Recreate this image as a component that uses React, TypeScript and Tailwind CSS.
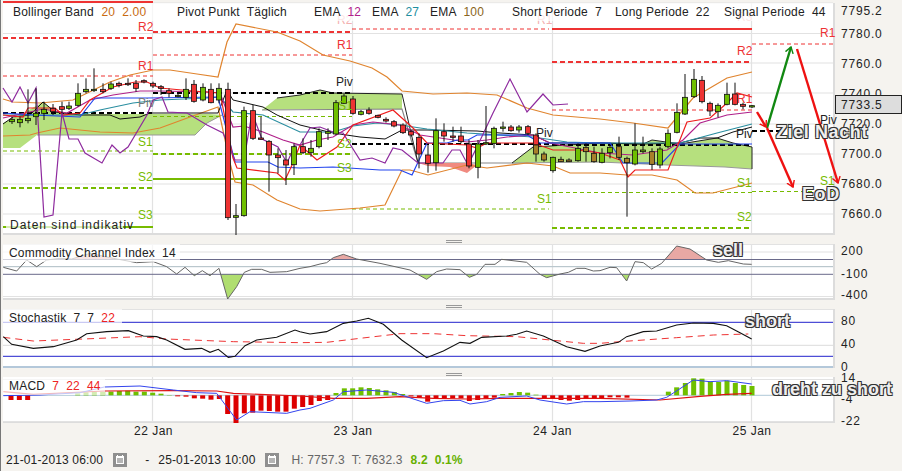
import type { ReactNode } from "react";

type Pt = [number, number];
type Candle = [number, number, number, number, number, "g" | "r" | "o"];

const RED = "#ee3333";
const GREEN = "#77bb00";

const line = (p: Pt[]) => p.map(([x, y]) => `${x},${y}`).join(" ");
// points read off the 3x crops: x offset by crop, y offset by crop
const crop = (p: Pt[], ox: number, oy: number): Pt[] =>
	p.map(([x, y]) => [x / 3 + ox, y / 3 + oy]);

const upperBand: Pt[] = [[3,99],[13,102],[40,103],[73,100],[110,82],[130,75],[153,70],[170,70],[197,74],[218,77],[227,42],[236,24],[277,32],[300,41],[323,55],[350,61],[372,68],[387,77],[402,91],[433,94],[467,93],[497,95],[527,108],[553,115],[600,119],[633,123],[668,128],[693,98],[727,78],[752,72]];
const lowerBand: Pt[] = [[3,136],[30,135],[37,133],[60,128],[100,132],[133,133],[160,128],[190,117],[218,107],[230,163],[235,182],[253,185],[277,200],[300,209],[320,211],[360,208],[385,205],[402,170],[410,170],[428,175],[467,165],[487,168],[527,163],[553,166],[570,173],[600,173],[627,175],[652,175],[677,180],[695,193],[713,193],[752,183]];
const purple: Pt[] = [[3,88],[12,102],[20,87],[28,103],[36,88],[44,217],[53,215],[62,113],[69,139],[78,139],[85,153],[102,163],[112,145],[120,153],[128,147],[147,115],[153,100],[162,97],[168,112],[187,113],[207,125],[223,133],[235,160],[244,160],[252,113],[262,139],[268,142],[278,147],[287,163],[295,145],[300,145],[310,128],[320,127],[333,132],[343,133],[360,160],[372,158],[385,163],[393,148],[402,150],[418,163],[443,163],[452,150],[460,150],[468,165],[477,147],[493,113],[510,79],[527,112],[543,94],[553,105],[568,104]];
const magenta: Pt[] = [[3,118],[43,109],[67,113],[90,100],[113,95],[140,91],[160,91],[207,92],[220,93],[233,127],[244,126],[263,132],[283,140],[300,145],[317,140],[333,137],[353,125],[373,122],[400,125],[420,135],[467,142],[487,140],[507,137],[533,135],[550,143],[600,153],[633,155],[667,150],[683,140],[700,123],[727,115],[752,112]];
const teal: Pt[] = [[3,115],[80,115],[100,110],[133,103],[160,100],[207,98],[220,97],[233,112],[263,115],[300,132],[333,132],[353,126],[377,123],[400,125],[427,129],[467,133],[533,137],[567,142],[600,143],[680,143],[717,133],[752,124]];
const blue: Pt[] = [[3,113],[33,115],[80,117],[95,98],[147,98],[218,97],[235,162],[268,162],[278,167],[300,168],[333,167],[380,170],[400,170],[412,175],[427,143],[447,143],[457,140],[468,140],[477,135],[527,135],[540,143],[567,143],[610,143],[623,163],[662,163],[680,144],[752,144]];
const redLine: Pt[] = [[3,115],[23,117],[28,108],[55,108],[63,115],[80,113],[90,100],[113,87],[135,82],[147,82],[160,88],[193,91],[220,93],[233,158],[237,168],[277,173],[285,180],[293,163],[300,145],[317,160],[337,147],[353,125],[393,110],[413,128],[427,143],[467,145],[477,148],[487,143],[533,143],[553,150],[577,150],[600,153],[620,160],[628,177],[635,170],[668,170],[687,122],[710,118],[727,103],[737,93],[752,97]];
const kijun: Pt[] = [[3,124],[13,117],[30,115],[43,102],[55,112],[80,115],[110,115],[120,119],[140,117],[150,113],[210,113],[218,113],[227,90],[233,100],[263,107],[277,115],[300,125],[333,133],[360,137],[385,139],[402,130],[427,130],[477,131],[500,133],[533,135],[550,143],[600,143],[643,144],[680,143],[700,138],[717,138],[733,132],[752,127]];

const candles: Candle[] = [
	[12,358,365,350,372,"g"],[20,358,368,350,382,"g"],[28,355,362,268,370,"g"],[36,340,350,265,375,"g"],[44,328,340,305,360,"g"],[53,325,335,312,345,"r"],[62,320,328,305,340,"r"],[69,318,325,305,330,"g"],[78,280,316,250,320,"g"],[86,268,275,235,280,"g"],[94,268,272,205,276,"g"],[103,268,275,250,280,"r"],[111,252,265,245,270,"g"],[119,250,256,245,262,"r"],[128,250,254,235,258,"r"],[136,250,265,240,275,"r"],[144,242,246,238,250,"r"],[153,250,258,245,264,"r"],[161,260,265,255,285,"r"],[169,272,280,265,292,"r"],[178,286,290,280,292,"g"],[186,268,292,235,300,"g"],[194,253,304,240,308,"r"],[203,262,300,250,304,"g"],[211,268,308,250,310,"r"],[219,265,300,250,310,"g"],[228,268,653,248,660,"r"],[236,647,652,612,705,"g"],[244,332,647,320,650,"g"],[253,332,415,315,420,"r"],[261,414,418,350,420,"r"],[269,424,465,420,575,"r"],[278,465,473,445,520,"r"],[286,480,495,450,555,"r"],[294,440,494,430,525,"g"],
	[303,440,458,415,462,"r"],[311,445,458,420,470,"g"],[319,395,440,385,445,"g"],[328,395,400,385,420,"g"],[336,308,402,300,405,"g"],[344,288,310,282,312,"g"],[353,297,340,288,344,"r"],[361,335,343,330,346,"g"],[369,330,340,322,344,"r"],[378,346,352,344,355,"r"],[386,358,363,352,368,"r"],[394,365,378,360,382,"r"],[403,375,398,370,402,"r"],[411,395,405,390,410,"r"],[419,412,462,400,505,"r"],[428,465,490,435,518,"r"],[436,392,488,355,512,"g"],[444,395,408,370,425,"r"],[453,408,412,380,425,"r"],[461,408,425,380,430,"r"],[469,432,498,420,505,"r"],[478,432,502,420,535,"g"],[486,428,432,318,435,"g"],[494,385,430,380,445,"g"],[503,381,385,365,395,"g"],[511,381,392,375,395,"r"],[519,381,390,375,398,"g"],[528,380,400,375,405,"r"],[536,405,435,400,438,"r"],[536,435,462,435,485,"o"],[544,462,480,455,485,"o"],[553,472,512,470,518,"g"],[561,478,485,470,486,"o"],[569,480,485,475,486,"o"],[578,445,482,430,485,"g"],[586,442,455,430,485,"o"],[594,460,485,440,488,"o"],
	[602,460,487,445,490,"g"],[610,442,458,435,475,"g"],[619,440,472,410,480,"o"],[627,475,488,470,650,"o"],[635,450,492,370,496,"g"],[643,450,455,410,460,"g"],[652,455,493,445,510,"o"],[660,447,495,440,505,"g"],[668,400,440,388,445,"g"],[677,337,397,310,400,"g"],[685,292,342,222,345,"g"],[694,238,290,207,294,"g"],[702,241,305,228,310,"r"],[710,310,333,305,348,"r"],[718,316,335,310,352,"g"],[727,283,313,248,316,"g"],[735,282,313,248,316,"r"],[743,313,319,308,328,"r"],[752,317,321,315,324,"g"],
];

function Handle() {
	return (
		<div className="flex h-[9px] flex-col gap-px pt-[5px] pl-[446px]">
			<div className="h-px w-[16px] bg-[#999]" />
			<div className="h-px w-[16px] bg-[#999]" />
		</div>
	);
}

function Panel({ top, height, axis, children, labels }: { top: number; height: number; axis: ReactNode; children: ReactNode; labels: ReactNode }) {
	return (
		<div className="flex pl-[3px]" style={{ height }}>
			<div className="relative w-[832px] border-r-2 border-b-2 border-[#dcdcdc] bg-white" style={{ height }}>
				<svg width={830} height={height - 2} viewBox={`3 ${top} 830 ${height - 2}`} className="block overflow-visible">
					{children}
				</svg>
				{labels}
			</div>
			{axis}
		</div>
	);
}

function VGrid({ y1, y2 }: { y1: number; y2: number }) {
	return (
		<g stroke="#e2e2e2" strokeWidth={1.2}>
			{[152.5, 352.5, 552.5, 751.5].map((x) => (
				<line key={x} x1={x} x2={x} y1={y1} y2={y2} />
			))}
		</g>
	);
}

function HGrid({ ys, x2 = 833 }: { ys: number[]; x2?: number }) {
	return (
		<g stroke="#e2e2e2" strokeWidth={1.2}>
			{ys.map((y) => (
				<line key={y} x1={3} x2={x2} y1={y} y2={y} />
			))}
		</g>
	);
}

type Level = [number, number, number, "thick" | "thin" | "solid", string];
const levels: Level[] = [
	[3,153,2,"solid",RED],[3,153,38,"thick",RED],[3,153,76,"thin",RED],[3,153,113,"thick","#000"],[3,153,151,"thin",GREEN],[3,153,188,"thick",GREEN],[3,153,227,"solid",GREEN],
	[153,352,32,"thick",RED],[153,352,55,"thin",RED],[153,352,93,"thick","#000"],[153,352,116.5,"thin",GREEN],[153,352,154,"thick",GREEN],[153,353,179,"solid",GREEN],
	[352,549,29,"thin",RED],[352,549,144,"thick","#000"],[352,549,209,"thin",GREEN],
	[552,752,29,"solid",RED],[552,752,62,"thick",RED],[552,752,110,"thin",RED],[552,752,145,"thick","#000"],[552,752,192.5,"thin",GREEN],[552,752,228,"thick",GREEN],
	[752,833,44,"thin",RED],[752,780,131,"thick","#000"],[752,833,191.5,"thin",GREEN],
];

const pivotLabels: [number, number, string, string][] = [
	[138,31,"R2",RED],[138,70,"R1",RED],[138,107,"Piv","#777"],[138,146,"S1",GREEN],[138,181,"S2",GREEN],[138,219,"S3",GREEN],
	[337,24,"R2","#f3b0b0"],[337,49,"R1",RED],[336,86,"Piv","#222"],[338,110,"S1",GREEN],[337,148,"S2",GREEN],[337,172,"S3",GREEN],
	[537,24,"R1","#f3b0b0"],[536,137,"Piv","#222"],[537,203,"S1",GREEN],
	[737,21,"R3","#f3b0b0"],[737,55,"R2",RED],[737,103,"R1",RED],[736,138,"Piv","#222"],[737,187,"S1",GREEN],[737,221,"S2",GREEN],
	[820,37,"R1",RED],[820,124,"Piv","#222"],[820,185,"S1",GREEN],
];

function MainChart() {
	return (
		<>
			<defs>
				<marker id="headR" markerUnits="userSpaceOnUse" markerWidth="7" markerHeight="10" refX="6" refY="5" orient="auto">
					<path d="M0 1 L6 5 L0 9" fill="none" stroke="#ee1111" strokeWidth="1.4" />
				</marker>
				<marker id="headG" markerUnits="userSpaceOnUse" markerWidth="7" markerHeight="10" refX="6" refY="5" orient="auto">
					<path d="M0 1 L6 5 L0 9" fill="none" stroke="#118811" strokeWidth="1.4" />
				</marker>
			</defs>
			<HGrid ys={[3, 33.5, 63, 93, 124, 154, 184, 214]} />
			<VGrid y1={3} y2={233} />

			<polygon points="3,123 20,115 43,102 55,111 80,114 210,114 222,115 207,123 195,135 37,135 20,148 3,148" fill="#b6e07e" />
			<polyline points="37,135 195,135 207,123 222,115" fill="none" stroke="#999" />
			<polygon points="262,110 277,98 300,95 320,90 333,93 402,94 402,109 300,109" fill="#b6e07e" />
			<polyline points="262,110 402,109 418,163 468,163 512,163 533,163" fill="none" stroke="#888" strokeWidth={1.2} />
			<polyline points="277,98 300,95 320,90 333,93 402,94 418,163" fill="none" stroke="#222" />
			<polygon points="418,163 468,163 477,165 467,173 450,167 428,166" fill="#f08a80" />
			<polygon points="512,163 533,147 600,143 643,144 652,140 680,144 717,138 733,143 752,147 752,169 725,167 667,165 600,162" fill="#b6e07e" />
			<polyline points="512,163 600,162 667,165 725,167 752,169" fill="none" stroke="#999" />
			<polyline points="512,163 533,147 600,143 643,144 652,140 680,144 717,138 733,143 752,147 752,169" fill="none" stroke="#222" />

			{levels.map(([x1, x2, y, kind, color], i) => (
				<line
					key={i}
					x1={x1}
					x2={x2}
					y1={y}
					y2={y}
					stroke={color}
					strokeWidth={kind === "thin" ? 1 : 2}
					strokeDasharray={kind === "thick" ? "5 3" : kind === "thin" ? "4 3" : undefined}
				/>
			))}

			<polyline points={line(upperBand)} fill="none" stroke="#e0842e" strokeWidth={1.2} />
			<polyline points={line(lowerBand)} fill="none" stroke="#e0842e" strokeWidth={1.2} />
			<polyline points={line(kijun)} fill="none" stroke="#111" strokeWidth={1} />
			<polyline points={line(teal)} fill="none" stroke="#2a8ea0" strokeWidth={1.2} />
			<polyline points={line(magenta)} fill="none" stroke="#b0208a" strokeWidth={1.2} />
			<polyline points={line(blue)} fill="none" stroke="#2244ee" strokeWidth={1.2} />
			<polyline points={line(redLine)} fill="none" stroke="#ee1c1c" strokeWidth={1.2} />
			<polyline points={line(purple)} fill="none" stroke="#8e2a9e" strokeWidth={1.2} />

			{candles.map(([x, top, bottom, wt, wb, c], i) => (
				<g key={i} stroke="#111">
					<line x1={x} x2={x} y1={wt / 3} y2={wb / 3} />
					<rect
						x={x - 2.5}
						y={top / 3}
						width={5}
						height={(bottom - top) / 3}
						strokeWidth={0.8}
						fill={c === "g" ? "#6fbf00" : c === "r" ? "#ee3333" : "#a8802a"}
					/>
				</g>
			))}

			{pivotLabels.map(([x, y, t, color], i) => (
				<text key={i} x={x} y={y} fill={color} className="text-[12px]">
					{t}
				</text>
			))}

			<line x1={767} y1={128} x2={791} y2={47} stroke="#118811" strokeWidth={2.4} markerEnd="url(#headG)" />
			<g stroke="#ee1111" strokeWidth={2.4}>
				<line x1={757} y1={112} x2={766} y2={127} markerEnd="url(#headR)" />
				<line x1={767} y1={128} x2={793} y2={187} markerEnd="url(#headR)" />
				<line x1={797} y1={49} x2={838} y2={183} markerEnd="url(#headR)" />
			</g>
		</>
	);
}

function Bars() {
	const data: [number, number, number, string][] = [];
	const add = (off: number, list: [number, number][], color: string) => {
		for (const [x, y] of list) data.push([x / 3 + off, y, 481, color]);
	};
	add(0, [[33,495],[58,495],[83,495],[533,484],[558,485],[583,490],[608,491],[633,494],[658,492],[683,537],[708,564],[733,535],[758,533],[783,527],[808,528],[833,530],[858,530],[883,521]], "#dd0000");
	add(0, [[233,475],[258,472],[283,470],[308,470],[333,470],[358,468],[383,467],[408,470],[433,470],[458,473],[483,476],[508,480]], "#6fbf00");
	add(300, [[8,516],[33,510],[58,498],[83,495],[333,484],[358,488],[383,500],[408,492],[433,490],[458,490],[483,490],[508,498],[533,495],[558,490],[583,488],[733,490],[758,490],[783,495],[808,497],[833,495],[858,490],[883,490]], "#dd0000");
	add(300, [[108,474],[133,460],[158,460],[183,457],[208,459],[233,463],[258,466],[283,471],[308,477],[608,477],[633,474],[658,471],[683,473],[708,479]], "#6fbf00");
	add(600, [[5,490],[30,487],[55,487],[81,488]], "#dd0000");
	add(600, [[205,470],[230,457],[256,444],[281,430],[306,431],[331,440],[356,441],[381,437],[406,444],[431,450],[456,453]], "#6fbf00");
	return (
		<>
			{data.map(([x, y, base, color], i) => (
				<rect
					key={i}
					x={x - 2.5}
					y={235 + Math.min(y, base) / 3}
					width={5}
					height={Math.abs(y - base) / 3}
					fill={color}
				/>
			))}
		</>
	);
}

const cci: Pt[] = [
	...crop([[10,97],[50,108],[80,75],[110,95],[140,75],[180,70],[215,72],[270,55],[340,70],[410,83],[460,80],[500,95],[530,117],[555,97],[583,122],[607,107],[630,122],[657,100],[683,192],[710,155],[733,112],[755,103],[785,103],[810,112],[860,110],[900,100]], 0, 235),
	...crop([[30,95],[60,87],[80,83],[100,68],[130,58],[170,72],[240,85],[330,105],[380,133],[410,110],[440,102],[480,104],[508,127],[530,118],[555,88],[585,88],[605,73],[680,82],[720,118],[740,128],[780,117],[805,112],[830,100],[855,100],[880,108],[900,107]], 300, 235),
	...crop([[30,97],[50,98],[80,138],[105,80],[130,83],[155,102],[185,85],[230,33],[270,42],[320,75],[355,82],[385,77],[430,87],[455,88]], 600, 235),
];
const stoch: Pt[] = [
	...crop([[10,305],[35,328],[100,340],[160,335],[230,315],[260,296],[320,290],[385,287],[430,303],[470,305],[500,315],[555,343],[605,340],[630,352],[655,343],[685,367],[705,364],[735,332],[770,315],[830,307],[885,285],[900,290]], 0, 235),
	...crop([[30,297],[80,290],[130,265],[170,258],[205,250],[250,268],[305,315],[380,368],[430,348],[480,322],[510,325],[545,307],[620,303],[650,298],[680,288],[730,303],[800,335],[855,349],[900,333]], 300, 235),
	...crop([[55,322],[80,305],[130,290],[170,288],[230,270],[280,264],[340,265],[380,272],[420,293],[455,312]], 600, 235),
];
const stochSignal: Pt[] = [
	...crop([[10,307],[100,318],[250,312],[420,305],[500,312],[700,320],[900,323]], 0, 235),
	...crop([[80,322],[180,310],[300,296],[400,296],[500,302],[650,305],[750,315],[850,325],[900,325]], 300, 235),
	...crop([[60,320],[230,308],[340,300],[445,297]], 600, 235),
];
const macdRed: Pt[] = [
	...crop([[10,470],[100,478],[313,468],[520,467],[650,468],[700,475],[900,483]], 0, 235),
	...crop([[100,490],[200,490],[300,485],[400,490],[500,492],[600,490],[900,490]], 300, 235),
	...crop([[180,495],[300,484],[380,478],[455,475]], 600, 235),
];
const macdBlue: Pt[] = [
	...crop([[10,482],[120,480],[240,473],[313,456],[420,453],[520,465],[590,473],[650,475],[710,555],[750,530],[860,535],[900,525]], 0, 235),
	...crop([[30,520],[100,495],[130,470],[200,465],[280,472],[380,505],[430,497],[480,496],[510,507],[560,500],[600,487],[680,483],[720,495],[800,507],[850,500],[900,500]], 300, 235),
	...crop([[90,498],[170,495],[200,487],[280,435],[330,440],[380,437],[455,447]], 600, 235),
];

function AxisColumn({ rows, mt = 0 }: { rows: [string, number][]; mt?: number }) {
	return (
		<div className="w-[67px] pl-[6px] text-[12px] tracking-[0.8px] text-[#222]" style={{ marginTop: mt }}>
			{rows.map(([t, h]) => (
				<div key={t} className="flex items-center" style={{ height: h }}>
					{t}
				</div>
			))}
		</div>
	);
}

function Legend({ w, children }: { w: number; children: ReactNode }) {
	return (
		<div className="absolute top-0 left-0 flex h-[18px] items-center whitespace-nowrap bg-white/70 pl-[6px] text-[12px] tracking-[0.2px] text-[#222]" style={{ width: w }}>
			{children}
		</div>
	);
}

function CalendarIcon() {
	return (
		<svg width={14} height={14} viewBox="0 0 14 14" className="block shrink-0">
			<rect width={14} height={14} fill="#8f8f8f" />
			<rect x={3.5} y={3.5} width={7} height={7} fill="#b5b5b5" stroke="#fff" strokeWidth={1} />
			<rect x={3} y={3} width={8} height={2} fill="#fff" />
			<rect x={4} y={2} width={1} height={1} fill="#fff" />
			<rect x={9} y={2} width={1} height={1} fill="#fff" />
		</svg>
	);
}

const overlayText =
	"absolute font-bold whitespace-nowrap text-[#eeeeee] [text-shadow:-1px_-1px_0_#333,1px_-1px_0_#333,-1px_1px_0_#333,1px_1px_0_#333]";

export default function App() {
	return (
		<div className="relative flex h-[471px] w-[902px] flex-col overflow-hidden border-l border-[#777] bg-[#f5f3ef] font-['Liberation_Sans',Arial,sans-serif]">
			<div className="-ml-px shrink-0 pt-[3px]">
				<Panel
					top={3}
					height={232}
					axis={
						<div className="relative">
							<AxisColumn
								rows={[["7795.2", 15.5], ["7780.0", 30], ["7760.0", 30], ["7740.0", 30], ["7720.0", 30], ["7700.0", 30], ["7680.0", 30], ["7660.0", 30]]}
							/>
							<div className="absolute top-[92px] left-0 flex h-[19px] w-[67px] items-center border border-[#222] bg-[#dddddd] pl-[5px] text-[12px] tracking-[0.8px] text-[#222]">
								7733.5
							</div>
						</div>
					}
					labels={
						<>
							<Legend w={830}>
								<span className="w-[168px] pl-[4px]">Bollinger Band <span className="ml-[4px] text-[#c86a10]">20&nbsp; 2.00</span></span>
								<span className="w-[137px]">Pivot Punkt&nbsp; Täglich</span>
								<span className="w-[58px]">EMA <span className="ml-[4px] text-[#b0208a]">12</span></span>
								<span className="w-[58px]">EMA <span className="ml-[4px] text-[#1f8fa0]">27</span></span>
								<span className="w-[82px]">EMA <span className="ml-[4px] text-[#8a6420]">100</span></span>
								<span className="w-[103px]">Short Periode&nbsp; 7</span>
								<span className="w-[109px]">Long Periode&nbsp; 22</span>
								<span>Signal Periode&nbsp; 44</span>
							</Legend>
							<div className="absolute bottom-[1px] left-[3px] h-[14px] w-[117px] whitespace-nowrap bg-white/70 pl-[4px] text-[12px] leading-[14px] tracking-[1px] text-[#222]">
								Daten sind indikativ
							</div>
						</>
					}
				>
					<MainChart />
				</Panel>
				<Handle />

				<Panel
					top={244}
					height={56}
					axis={<AxisColumn rows={[["200", 14], ["-100", 32], ["-400", 10]]} />}
					labels={
						<Legend w={177}>
							<span>Commodity Channel Index&nbsp; 14</span>
						</Legend>
					}
				>
					<defs>
						<clipPath id="above"><rect x={3} y={240} width={830} height={19.5} /></clipPath>
						<clipPath id="below"><rect x={3} y={274} width={830} height={30} /></clipPath>
					</defs>
					<HGrid ys={[244.5, 252, 266.5, 296.5]} />
					<VGrid y1={244} y2={298} />
					<polygon points={line([[3, 259.5], ...cci, [752, 259.5]])} fill="#e8a8a4" clipPath="url(#above)" />
					<polygon points={line([[3, 274], ...cci, [752, 274]])} fill="#b0de70" clipPath="url(#below)" />
					<line x1={3} x2={833} y1={266.7} y2={266.7} stroke="#b0c0c8" />
					<line x1={3} x2={833} y1={259.5} y2={259.5} stroke="#6a6a8a" />
					<line x1={3} x2={833} y1={274.3} y2={274.3} stroke="#6a6a8a" />
					<polyline points={line(cci)} fill="none" stroke="#666" />
				</Panel>
				<Handle />

				<Panel
					top={309}
					height={59}
					axis={<AxisColumn rows={[["80", 23], ["40", 23], ["0", 23]]} />}
					labels={
						<Legend w={119}>
							<span>Stochastik&nbsp; 7&nbsp; 7&nbsp; <span className="text-[#ee2222]">22</span></span>
						</Legend>
					}
				>
					<HGrid ys={[309.5, 345.3]} />
					<VGrid y1={309} y2={366} />
					<line x1={3} x2={833} y1={367} y2={367} stroke="#b4c8da" strokeWidth={2} />
					<line x1={3} x2={833} y1={322.3} y2={322.3} stroke="#2222cc" />
					<line x1={3} x2={833} y1={356.3} y2={356.3} stroke="#2222cc" />
					<polyline points={line(stochSignal)} fill="none" stroke="#ee3333" strokeDasharray="7 5" />
					<polyline points={line(stoch)} fill="none" stroke="#111" strokeWidth={1.1} />
				</Panel>
				<Handle />

				<Panel
					top={377}
					height={46}
					axis={<AxisColumn mt={-6} rows={[["14", 14], ["-4", 28], ["-22", 16]]} />}
					labels={
						<Legend w={102}>
							<span>MACD&nbsp; <span className="text-[#ee2222]">7&nbsp; 22&nbsp; 44</span></span>
						</Legend>
					}
				>
					<HGrid ys={[379.5, 421.5]} />
					<VGrid y1={377} y2={422} />
					<line x1={3} x2={833} y1={395.3} y2={395.3} stroke="#b0c8d8" />
					<Bars />
					<polyline points={line(macdRed)} fill="none" stroke="#dd1111" strokeWidth={1.2} />
					<polyline points={line(macdBlue)} fill="none" stroke="#3344ee" />
				</Panel>
			</div>

			<div className="flex h-[14px] shrink-0 pt-[2px] pl-[133px] text-[12px] leading-[13px] tracking-[0.5px] text-[#222]">
				<div className="w-[199.5px]">22 Jan</div>
				<div className="w-[199.5px]">23 Jan</div>
				<div className="w-[199.5px]">24 Jan</div>
				<div>25 Jan</div>
			</div>

			<div className="mt-[14px] flex items-center pl-[5px] text-[12px] tracking-[0.15px] text-[#222]">
				<span>21-01-2013 06:00</span>
				<span className="ml-[10px]"><CalendarIcon /></span>
				<span className="ml-[18px]">-</span>
				<span className="ml-[9px]">25-01-2013 10:00</span>
				<span className="ml-[10px]"><CalendarIcon /></span>
				<span className="ml-[12px] text-[#666]">H: 7757.3</span>
				<span className="ml-[7px] text-[#666]">T: 7632.3</span>
				<span className="ml-[8px] font-bold text-[#66b000]">8.2</span>
				<span className="ml-[7px] font-bold text-[#66b000]">0.1%</span>
			</div>

			<span className={`${overlayText} top-[119px] left-[775px] text-[18px] tracking-[0.6px]`}>Ziel Nacht</span>
			<span className={`${overlayText} top-[181px] left-[801px] text-[18px] tracking-[0.6px]`}>EoD</span>
			<span className={`${overlayText} top-[237px] left-[712px] text-[18px]`}>sell</span>
			<span className={`${overlayText} top-[308px] left-[744px] text-[18px]`}>short</span>
			<span className={`${overlayText} top-[376px] left-[771px] text-[18px]`}>dreht zu short</span>
		</div>
	);
}
